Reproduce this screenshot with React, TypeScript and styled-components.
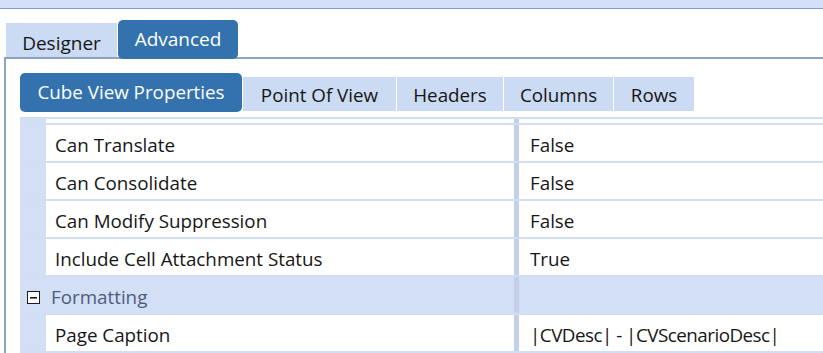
import styled, { createGlobalStyle } from 'styled-components'

const GlobalStyle = createGlobalStyle`
  html, body {
    margin: 0;
    padding: 0;
    background: #ffffff;
    overflow: hidden;
  }
  body {
    font-family: "Open Sans", "Noto Sans", "Liberation Sans", sans-serif;
    color: #161616;
  }
`

const LINE = '#d2def4'
const STRIP = '#d3dff5'
const DIVIDER = '#c3d0ea'
const TAB = '#cbdbf3'
const ACTIVE = '#3472ad'

const Page = styled.div`
  width: 823px;
  height: 353px;
  overflow: hidden;
`

const TopBand = styled.div`
  height: 8px;
  background: #d4e0f6;
  border-bottom: 1px solid #7f9ed6;
`

const OuterTabs = styled.div`
  display: flex;
  align-items: flex-end;
  padding: 11px 0 0 6px;
  height: 37px;
  position: relative;
  z-index: 1;
`

const OuterTab = styled.div<{ $active?: boolean }>`
  display: flex;
  align-items: center;
  justify-content: center;
  box-sizing: border-box;
  width: ${({ $active }) => ($active ? '120px' : '111px')};
  height: ${({ $active }) => ($active ? '39px' : '34px')};
  margin-bottom: ${({ $active }) => ($active ? '-2px' : '0')};
  margin-left: ${({ $active }) => ($active ? '1px' : '0')};
  padding-bottom: ${({ $active }) => ($active ? '2px' : '0')};
  padding-top: ${({ $active }) => ($active ? '0' : '6px')};
  background: ${({ $active }) => ($active ? ACTIVE : TAB)};
  color: ${({ $active }) => ($active ? '#ffffff' : '#161616')};
  border-radius: ${({ $active }) => ($active ? '5px' : '0')};
  font-size: 19px;
`

const Panel = styled.div`
  margin-left: 4px;
  border-top: 2px solid #8ea2c0;
  border-left: 2px solid #8ea2c0;
  padding: 14px 0 0 14px;
`

const InnerTabs = styled.div`
  display: flex;
  align-items: center;
  gap: 1px;
  height: 39px;
`

const InnerTab = styled.div<{ $active?: boolean; $w: number }>`
  display: flex;
  align-items: center;
  justify-content: center;
  box-sizing: border-box;
  width: ${({ $w }) => $w}px;
  height: ${({ $active }) => ($active ? '39px' : '34px')};
  margin-top: ${({ $active }) => ($active ? '0' : '2px')};
  padding-top: ${({ $active }) => ($active ? '0' : '2px')};
  padding-bottom: ${({ $active }) => ($active ? '2px' : '0')};
  background: ${({ $active }) => ($active ? ACTIVE : TAB)};
  color: ${({ $active }) => ($active ? '#ffffff' : '#161616')};
  border-radius: ${({ $active }) => ($active ? '5px' : '0')};
  font-size: 18.8px;
`

const Grid = styled.div`
  margin-top: 5px;
  border-top: 2px solid ${LINE};
`

const Row = styled.div<{ $h?: number; $group?: boolean }>`
  display: grid;
  grid-template-columns: 26px 468px 5px 1fr;
  height: ${({ $h }) => $h ?? 36}px;
  border-bottom: 2px solid ${LINE};
  background: ${({ $group }) => ($group ? STRIP : '#ffffff')};
  font-size: 18.8px;
`

const Strip = styled.div`
  background: ${STRIP};
  display: flex;
  align-items: center;
  justify-content: center;
  padding: 4px 0 0 1px;
`

const Name = styled.div`
  display: flex;
  align-items: center;
  padding: 4px 0 0 9px;
  white-space: nowrap;
`

const GroupName = styled(Name)`
  padding-left: 5px;
  color: #4e5c7c;
`

const Divider = styled.div`
  background: ${DIVIDER};
`

const Value = styled.div`
  display: flex;
  align-items: center;
  padding: 4px 0 0 11px;
  white-space: nowrap;
`

const Caption = styled.span`
  letter-spacing: -0.5px;
`

const MinusBox = () => (
  <svg width="13" height="13" viewBox="0 0 13 13">
    <rect x="0.5" y="0.5" width="12" height="12" fill="#ffffff" stroke="#1e1e1e" />
    <rect x="3" y="6" width="7" height="1.6" fill="#1e1e1e" />
  </svg>
)

const props = [
  { name: 'Can Translate', value: 'False' },
  { name: 'Can Consolidate', value: 'False' },
  { name: 'Can Modify Suppression', value: 'False' },
  { name: 'Include Cell Attachment Status', value: 'True' },
]

const innerTabs = [
  { label: 'Cube View Properties', w: 222, active: true },
  { label: 'Point Of View', w: 153 },
  { label: 'Headers', w: 106 },
  { label: 'Columns', w: 109 },
  { label: 'Rows', w: 80 },
]

export default function App() {
  return (
    <Page>
      <GlobalStyle />
      <TopBand />
      <OuterTabs>
        <OuterTab>Designer</OuterTab>
        <OuterTab $active>Advanced</OuterTab>
      </OuterTabs>
      <Panel>
        <InnerTabs>
          {innerTabs.map(t => (
            <InnerTab key={t.label} $w={t.w} $active={t.active}>
              {t.label}
            </InnerTab>
          ))}
        </InnerTabs>
        <Grid>
          <Row $h={4}>
            <Strip />
            <div />
            <Divider />
            <div />
          </Row>
          {props.map(p => (
            <Row key={p.name}>
              <Strip />
              <Name>{p.name}</Name>
              <Divider />
              <Value>{p.value}</Value>
            </Row>
          ))}
          <Row $group>
            <Strip>
              <MinusBox />
            </Strip>
            <GroupName>Formatting</GroupName>
            <Divider />
            <div />
          </Row>
          <Row>
            <Strip />
            <Name>Page Caption</Name>
            <Divider />
            <Value>
              <Caption>|CVDesc| - |CVScenarioDesc|</Caption>
            </Value>
          </Row>
        </Grid>
      </Panel>
    </Page>
  )
}
